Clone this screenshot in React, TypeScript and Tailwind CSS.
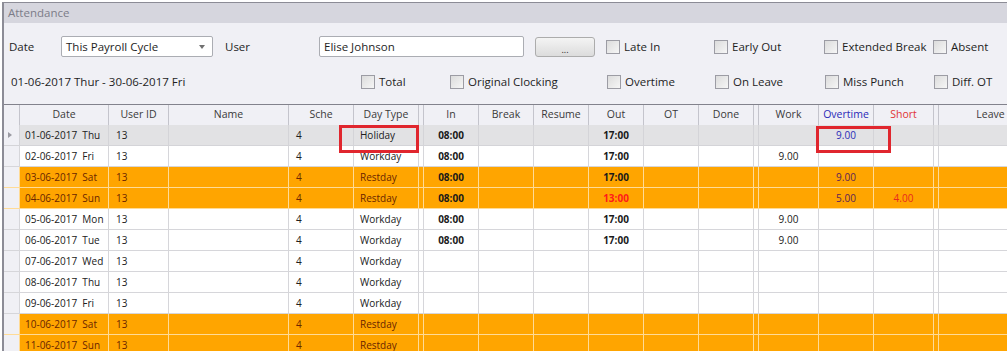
import React from 'react';

interface Row {
  date: string;
  day: string;
  type: string;
  tin?: string;
  tout?: string;
  outLate?: boolean;
  work?: string;
  overtime?: string;
  short?: string;
  kind: 'sel' | 'white' | 'orange';
}

const rows: Row[] = [
  { date: '01-06-2017', day: 'Thu', type: 'Holiday', tin: '08:00', tout: '17:00', overtime: '9.00', kind: 'sel' },
  { date: '02-06-2017', day: 'Fri', type: 'Workday', tin: '08:00', tout: '17:00', work: '9.00', kind: 'white' },
  { date: '03-06-2017', day: 'Sat', type: 'Restday', tin: '08:00', tout: '17:00', overtime: '9.00', kind: 'orange' },
  { date: '04-06-2017', day: 'Sun', type: 'Restday', tin: '08:00', tout: '13:00', outLate: true, overtime: '5.00', short: '4.00', kind: 'orange' },
  { date: '05-06-2017', day: 'Mon', type: 'Workday', tin: '08:00', tout: '17:00', work: '9.00', kind: 'white' },
  { date: '06-06-2017', day: 'Tue', type: 'Workday', tin: '08:00', tout: '17:00', work: '9.00', kind: 'white' },
  { date: '07-06-2017', day: 'Wed', type: 'Workday', kind: 'white' },
  { date: '08-06-2017', day: 'Thu', type: 'Workday', kind: 'white' },
  { date: '09-06-2017', day: 'Fri', type: 'Workday', kind: 'white' },
  { date: '10-06-2017', day: 'Sat', type: 'Restday', kind: 'orange' },
  { date: '11-06-2017', day: 'Sun', type: 'Restday', kind: 'orange' },
];

const cols = 'grid grid-cols-[16px_89px_60px_120px_65px_65px_5px_55px_55px_55px_55px_55px_55px_5px_60px_55px_60px_5px_104px]';

const Check: React.FC<{ label: string; w: string }> = ({ label, w }) => (
  <div className={`flex items-center gap-[4px] ${w}`}>
    <span className="w-[14px] h-[14px] border border-[#9c9ca4] bg-gradient-to-br from-[#dcdcdc] to-[#f6f6f6] shrink-0" />
    <span className="whitespace-nowrap text-[#1e1e1e]">{label}</span>
  </div>
);

const headers = ['', 'Date', 'User ID', 'Name', 'Sche', 'Day Type', '', 'In', 'Break', 'Resume', 'Out', 'OT', 'Done', '', 'Work', 'Overtime', 'Short', '', 'Leave'];

export default function App() {
  return (
    <div className="w-[1007px] h-[351px] overflow-hidden bg-white pt-[2px] font-['Open_Sans',sans-serif]">
      <div className="ml-[2px] h-full border-l-2 border-t border-[#8c8c96] bg-[#f0f0f5] flex flex-col">
        <div className="h-[20px] bg-[#d6d6de] text-[11.5px] text-[#7c7c88] pl-[4px] flex items-center">Attendance</div>

        <div className="h-[81px] pt-[13px] text-[11.5px] text-[#1e1e1e]">
          <div className="h-[21px] flex items-center">
            <span className="w-[57px] pl-[5px]">Date</span>
            <div className="w-[152px] h-[21px] bg-white border border-[#abadb3] rounded-[2px] flex items-center justify-between pl-[4px] pr-[7px]">
              <span>This Payroll Cycle</span>
              <span className="w-0 h-0 border-l-[3px] border-r-[3px] border-t-[4px] border-l-transparent border-r-transparent border-t-[#707070]" />
            </div>
            <span className="w-[106px] pl-[12px]">User</span>
            <div className="w-[205px] h-[21px] bg-white border border-[#abadb3] rounded-[2px] flex items-center pl-[4px]">Elise Johnson</div>
            <div className="ml-[11px] w-[60px] h-[20px] border border-[#acacac] rounded-[3px] bg-gradient-to-b from-[#f4f4f4] to-[#dcdcdc] flex items-end justify-center pb-[2px] text-[9px] leading-none">...</div>
            <div className="ml-[11px] flex">
              <Check label="Late In" w="w-[108px]" />
              <Check label="Early Out" w="w-[110px]" />
              <Check label="Extended Break" w="w-[109px]" />
              <Check label="Absent" w="w-[70px]" />
            </div>
          </div>
          <div className="h-[21px] mt-[14px] flex items-center">
            <span className="w-[357px] pl-[7px]">01-06-2017 Thur - 30-06-2017 Fri</span>
            <Check label="Total" w="w-[89px]" />
            <Check label="Original Clocking" w="w-[157px]" />
            <Check label="Overtime" w="w-[108px]" />
            <Check label="On Leave" w="w-[110px]" />
            <Check label="Miss Punch" w="w-[109px]" />
            <Check label="Diff. OT" w="w-[70px]" />
          </div>
        </div>

        <div className="relative flex-1 overflow-hidden border-t border-[#82828c] text-[10px]">
          <div className={`${cols} h-[20px] bg-[#f0f0f5] text-[#3a3a3a] text-[10.5px]`}>
            {headers.map((h, i) => (
              <div
                key={i}
                className={`flex items-center justify-center border-r border-[#c4c4cc] whitespace-nowrap ${
                  h === 'Overtime' ? 'text-[#2a2ab8]' : h === 'Short' ? 'text-[#e03434]' : ''
                }`}
              >
                {h}
              </div>
            ))}
          </div>
          {rows.map((r, i) => {
            const bg = r.kind === 'orange' ? 'bg-[#ffa500]' : r.kind === 'sel' ? 'bg-[#e2e2e4]' : 'bg-white';
            const line = r.kind === 'orange' ? 'border-[#ffdb96]' : r.kind === 'sel' ? 'border-[#d4d4d8]' : 'border-[#d6d6da]';
            const txt = r.kind === 'orange' ? 'text-[#6a2600]' : 'text-[#202020]';
            const cell = `h-[21px] border-r border-b ${line} flex items-center whitespace-nowrap`;
            return (
              <div key={i} className={`${cols} ${bg} ${txt}`}>
                <div className={`${cell} bg-[#f0f0f5] border-[#d0d0d8] pl-[4px]`}>
                  {r.kind === 'sel' && (
                    <span className="w-0 h-0 border-t-[3px] border-b-[3px] border-l-[4px] border-t-transparent border-b-transparent border-l-[#9a9aa2]" />
                  )}
                </div>
                <div className={`${cell} pl-[5px] whitespace-pre`}>{`${r.date}  ${r.day}`}</div>
                <div className={`${cell} pl-[7px]`}>13</div>
                <div className={cell} />
                <div className={`${cell} pl-[7px]`}>4</div>
                <div className={`${cell} pl-[6px]`}>{r.type}</div>
                <div className={cell} />
                <div className={`${cell} justify-center font-bold text-[#1a1a1a]`}>{r.tin}</div>
                <div className={cell} />
                <div className={cell} />
                <div className={`${cell} justify-center font-bold ${r.outLate ? 'text-[#ff1a1a]' : 'text-[#1a1a1a]'}`}>{r.tout}</div>
                <div className={cell} />
                <div className={cell} />
                <div className={cell} />
                <div className={`${cell} justify-center`}>{r.work}</div>
                <div className={`${cell} justify-center ${r.kind === 'orange' ? 'text-[#5c1e58]' : 'text-[#2a2ab8]'}`}>{r.overtime}</div>
                <div className={`${cell} justify-center text-[#e8281e]`}>{r.short}</div>
                <div className={cell} />
                <div className={cell} />
              </div>
            );
          })}

          <div className="absolute left-[335px] top-[20px] w-[80px] h-[28px] border-[3px] border-[#e0262e]" />
          <div className="absolute left-[812px] top-[21px] w-[75px] h-[27px] border-[3px] border-[#e0262e]" />
        </div>
      </div>
    </div>
  );
}
